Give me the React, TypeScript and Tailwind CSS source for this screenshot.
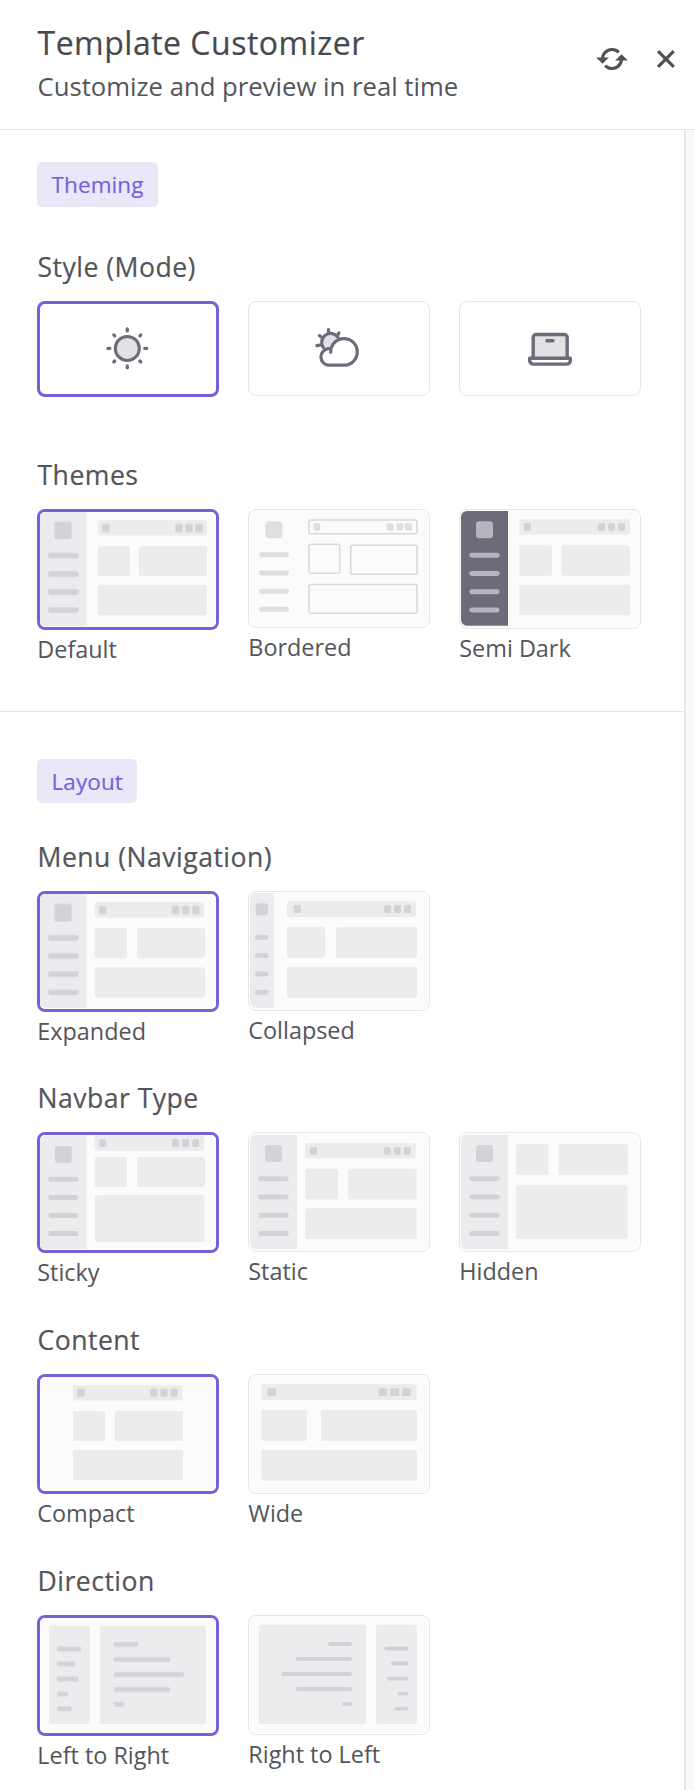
import type { ReactNode } from "react";
import { BiRefresh, BiX } from "react-icons/bi";

type Quad = [number, number, number, number];

const PANEL = "#ececee";
const MARK = "#d2d2d7";

/* Large light blocks: x, y, width, height */
function Blocks({ items }: { items: Quad[] }) {
  return (
    <>
      {items.map(([x, y, w, h], i) => (
        <rect key={i} x={x} y={y} width={w} height={h} rx={2.6} fill={PANEL} />
      ))}
    </>
  );
}

/* Small darker marks; soft ones get a translucent rim */
function Marks({ items, soft, fill = MARK, r = 2 }: { items: Quad[]; soft?: boolean; fill?: string; r?: number }) {
  return (
    <>
      {items.map(([x, y, w, h], i) => (
        <g key={i} fill={fill}>
          <rect x={x} y={y} width={w} height={h} rx={w > 15 && h > 15 ? 3 : r} opacity={soft ? 0.6 : 1} />
          {soft && <rect x={x + 1} y={y + 1} width={w - 2} height={h - 2} rx={r * 0.6} />}
        </g>
      ))}
    </>
  );
}

/* Horizontal strokes given by x, centre y, width, thickness */
function Lines({ items, soft, fill }: { items: Quad[]; soft?: boolean; fill?: string }) {
  return <Marks soft={soft} fill={fill} r={2.4} items={items.map(([x, c, w, h]): Quad => [x, c - h / 2, w, h])} />;
}

function Sidebar({ right, top = 2, bottom = 116.8, fill = PANEL }: { right: number; top?: number; bottom?: number; fill?: string }) {
  return (
    <path
      d={`M${right} ${top}H8a6 6 0 0 0-6 6V${bottom - 6}a6 6 0 0 0 6 6H${right}Z`}
      fill={fill}
    />
  );
}

function Tile({ height, selected, label, children }: { height: number; selected?: boolean; label?: string; children: ReactNode }) {
  const b = selected ? 3 : 1;
  return (
    <div className="flex w-[182px] flex-col gap-[3px]">
      <button
        type="button"
        style={{ height }}
        className={
          selected
            ? "block w-full overflow-hidden rounded-[8px] border-[3px] border-[#7462d9] bg-white"
            : "block w-full overflow-hidden rounded-[8px] border border-[#e6e6e8] bg-white"
        }
      >
        <svg className="block" width={182 - 2 * b} height={height - 2 * b} viewBox={`${b} ${b} ${182 - 2 * b} ${height - 2 * b}`}>
          {label && <rect x={2} y={2} width={178} height={height - 4} rx={6} fill="#fbfbfb" />}
          {children}
        </svg>
      </button>
      {label && <span className="pl-[0.3px] text-[23.4px] leading-8 text-[#54555a]">{label}</span>}
    </div>
  );
}

function Group({ title, className, children }: { title: string; className: string; children: ReactNode }) {
  return (
    <section className={className}>
      <h3 className="mb-4 pl-[0.5px] text-[26.6px] leading-9 tracking-[0.47px] text-[#54555a] [-webkit-text-stroke:0.2px_#54555a]">{title}</h3>
      <div className="flex items-start gap-[29px]">{children}</div>
    </section>
  );
}

function Badge({ className, children }: { className: string; children: ReactNode }) {
  return (
    <span className={`${className} flex w-fit items-center rounded-[5px] bg-[#eae7f8] pt-px pr-[14px] pl-[14.5px] text-[22.5px] tracking-[0.1px] text-[#7462d9] [-webkit-text-stroke:0.15px_#7462d9]`}>
      {children}
    </span>
  );
}

export default function App() {
  return (
    <div className="flex h-[1790px] w-[694px] flex-col overflow-hidden bg-white font-['Open_Sans',sans-serif]">
      <header className="flex h-[130px] shrink-0 items-start justify-between border-b border-[#e5e5e7] pl-[37px]">
        <div className="pt-5">
          <h1 className="pl-[0.5px] text-[32px] leading-[46px] tracking-[0.5px] text-[#48494d] [-webkit-text-stroke:0.2px_#48494d]">Template Customizer</h1>
          <p className="pl-[0.5px] text-[25.7px] leading-[42px] text-[#54555a]">Customize and preview in real time</p>
        </div>
        <div className="flex gap-[15.5px] pt-[39.5px] pr-[9.5px] text-[#505156]">
          <BiRefresh size={38} />
          <BiX size={38} />
        </div>
      </header>

      <div className="flex min-h-0 flex-1">
        <main className="w-[684px] shrink-0">
          <div className="h-[582px] border-b border-[#e5e5e7] pt-8 pl-[37px]">
            <Badge className="mb-[42px] h-[45px]">Theming</Badge>

            <Group title="Style (Mode)" className="h-[208px]">
              <Tile height={96} selected>
                <g stroke="#6d6b79" strokeWidth={3} strokeLinecap="round" transform="translate(90.3 47.4)">
                  <circle r={12} fill="#e2e1e6" />
                  <path d="M0-17.5V-19.4M0 17.5V19.4M-17.5 0H-19.4M17.5 0H19.4M12.6-12.6L13.5-13.5M-12.6-12.6L-13.5-13.5M12.6 12.6L13.5 13.5M-12.6 12.6L-13.5 13.5" strokeWidth={3.3} />
                </g>
              </Tile>
              <Tile height={95}>
                <g stroke="#6d6b79" strokeWidth={3.2} strokeLinecap="round" strokeLinejoin="round" fill="none">
                  <path d="M76 48A8.8 8.8 0 1 1 91 36.8C86.5 38.5 83.6 42 83 47.6Z" fill="#e2e1e6" stroke="none" />
                  <path d="M75.2 46.4A8.6 8.6 0 0 1 90 36.4" />
                  <path d="M80.4 28.6L80.8 32M91 31.8L89.2 35.2M71.4 34.6L74.2 36.8M68.9 44.7L73.4 43.9" />
                  <path d="M82.7 51.2A13.3 13.3 0 1 1 96 64.2H80.3A8.3 8.3 0 0 1 80.3 47.7Q81.6 47.6 82.6 47.8" />
                </g>
              </Tile>
              <Tile height={95}>
                <g stroke="#6d6b79" strokeWidth={3.4} strokeLinecap="round" strokeLinejoin="round">
                  <path d="M74.2 56.5V36.5a3 3 0 0 1 3-3H105.2a3 3 0 0 1 3 3V56.5" fill="#e2e1e6" />
                  <path d="M70.7 57.3H111.3V59.5a3.6 3.6 0 0 1-3.6 3.6H74.3a3.6 3.6 0 0 1-3.6-3.6Z" fill="white" />
                  <path d="M88 39.8H94" />
                </g>
              </Tile>
            </Group>

            <Group title="Themes" className="">
              <Tile height={121} selected label="Default">
                <Sidebar right={49.7} top={3.3} />
                <Blocks items={[[60.7, 11.3, 109.3, 15.3], [60.7, 37, 32.3, 30], [102, 37, 68, 30], [60.7, 76, 109.3, 30.3]]} />
                <Marks soft items={[[17, 12.3, 18, 18.3], [65, 14.5, 8, 9], [138, 14.5, 8, 9], [148, 14.5, 8, 9], [158, 14.5, 8, 9]]} />
                <Lines soft items={[[10.7, 46.7, 31.3, 6.3], [10.7, 65, 31.3, 6.3], [10.7, 83, 31.3, 6.3], [10.7, 101.2, 31.3, 6.3]]} />
              </Tile>
              <Tile height={119} label="Bordered">
                <g fill="none" stroke="#d9d9dd" strokeWidth={1.6}>
                  <rect x={61} y={11} width={108} height={13.7} rx={2} />
                  <rect x={61} y={35.3} width={30.7} height={29} rx={2} />
                  <rect x={102.7} y={36.3} width={66.3} height={29} rx={2} />
                  <rect x={61} y={75.5} width={108} height={28.7} rx={2} />
                </g>
                <Marks fill="#dfdfe1" items={[[17.3, 12.3, 17, 17], [65.3, 14.2, 7, 7.6], [138.5, 14.2, 7, 7.6], [148.5, 14.2, 7, 7.6], [157, 14.2, 7, 7.6]]} />
                <Lines fill="#dfdfe1" items={[[11, 45.8, 30, 5], [11, 64, 30, 5], [11, 82.2, 30, 5], [11, 100.3, 30, 5]]} />
              </Tile>
              <Tile height={120} label="Semi Dark">
                <Sidebar right={49} fill="#6d6b79" />
                <Blocks items={[[60.3, 10.3, 110.7, 15.3], [60.3, 36.3, 32.7, 30.4], [102.3, 36.3, 68.7, 30.4], [60.3, 76, 110.7, 30]]} />
                <Marks items={[[65, 14, 7, 8], [139, 14, 7, 8], [149, 14, 7, 8], [159, 14, 7, 8]]} />
                <Marks fill="#b6b5bd" items={[[17, 12.3, 17, 17]]} />
                <Lines fill="#b6b5bd" items={[[10.3, 46.2, 30.4, 5], [10.3, 64.4, 30.4, 5], [10.3, 82.7, 30.4, 5], [10.3, 101, 30.4, 5]]} />
              </Tile>
            </Group>
          </div>

          <div className="pt-[47px] pl-[37px]">
            <Badge className="mb-9 h-11">Layout</Badge>

            <Group title="Menu (Navigation)" className="h-[241px]">
              <Tile height={121} selected label="Expanded">
                <Sidebar right={49.7} top={3.3} />
                <Blocks items={[[57.7, 11.3, 109.3, 15.3], [57.7, 37, 32.3, 30.3], [100, 37, 68, 30.3], [57.7, 76.3, 110.3, 30.3]]} />
                <Marks soft items={[[17, 12.6, 18, 18.3], [61.7, 14.6, 8, 9], [134.7, 14.6, 8, 9], [144.7, 14.6, 8, 9], [154.7, 14.6, 8, 9]]} />
                <Lines soft items={[[10.7, 47, 31.3, 6.3], [10.7, 65, 31.3, 6.3], [10.7, 83.2, 31.3, 6.3], [10.7, 101.3, 31.3, 6.3]]} />
              </Tile>
              <Tile height={120} label="Collapsed">
                <Sidebar right={25.7} />
                <Blocks items={[[39, 10.3, 129, 15.7], [39, 36, 38, 31], [88, 36, 81, 31], [39, 76, 130, 30.7]]} />
                <Marks items={[[45.7, 14, 7, 8], [136, 14, 7, 8], [146, 14, 7, 8], [156, 14, 7, 8]]} r={1.5} />
                <Marks items={[[7.7, 12.3, 12.3, 12.3]]} r={3.5} />
                <Lines items={[[7, 46.3, 13.5, 5], [7, 64.6, 13.5, 5], [7, 82.9, 13.5, 5], [7, 101.2, 13.5, 5]]} />
              </Tile>
            </Group>

            <Group title="Navbar Type" className="h-[242px]">
              <Tile height={121} selected label="Sticky">
                <Sidebar right={49.7} top={3.7} bottom={117} />
                <Blocks items={[[57.7, 25, 32.3, 30], [100, 25, 68, 30], [57.9, 63, 109.7, 47]]} />
                <path d="M57.7 3.7H167V16.1a2.6 2.6 0 0 1-2.6 2.6H60.3a2.6 2.6 0 0 1-2.6-2.6Z" fill={PANEL} />
                <Marks items={[[18, 14, 16.8, 16.8], [62.3, 7, 6.8, 8], [135.2, 7, 6.8, 8], [145.2, 7, 6.8, 8], [155.2, 7, 6.8, 8]]} r={1.8} />
                <Lines items={[[11.3, 47.3, 30, 5], [11.3, 65.4, 30, 5], [11.3, 83.6, 30, 5], [11.3, 101.6, 30, 5]]} />
              </Tile>
              <Tile height={120} label="Static">
                <Sidebar right={49} top={3} bottom={117} />
                <Blocks items={[[57, 11, 110.7, 15.3], [57, 36.7, 33, 30.7], [100, 36.7, 68.7, 30.7], [57, 76.3, 111.7, 30.7]]} />
                <Marks items={[[17, 13, 17, 17], [62, 15, 7, 7.8], [135.7, 15, 7, 7.8], [145.7, 15, 7, 7.8], [155.7, 15, 7, 7.8]]} />
                <Lines items={[[10.3, 46.7, 30.4, 5], [10.3, 65, 30.4, 5], [10.3, 83.3, 30.4, 5], [10.3, 101.5, 30.4, 5]]} />
              </Tile>
              <Tile height={120} label="Hidden">
                <Sidebar right={49} top={3} bottom={117} />
                <Blocks items={[[57, 12.3, 32.8, 30.7], [99.7, 12.3, 69.3, 30.7], [57.2, 53, 111.2, 54]]} />
                <Marks items={[[17, 13, 17, 17]]} />
                <Lines items={[[10.3, 46.7, 30.4, 5], [10.3, 65, 30.4, 5], [10.3, 83.3, 30.4, 5], [10.3, 101.5, 30.4, 5]]} />
              </Tile>
            </Group>

            <Group title="Content" className="h-[241px]">
              <Tile height={120} selected label="Compact">
                <Blocks items={[[36, 11.3, 109.3, 15.3], [36, 37, 32, 30], [78, 37, 68, 30], [36, 76, 110, 30]]} />
                <Marks soft items={[[40, 14.3, 8, 9], [113, 14.3, 8, 9], [123, 14.3, 8, 9], [133, 14.3, 8, 9]]} />
              </Tile>
              <Tile height={120} label="Wide">
                <Blocks items={[[13.3, 10.3, 155.3, 15.7], [13.3, 36, 45.7, 31], [73, 36, 96, 31], [13.3, 76, 155.7, 30.7]]} />
                <Marks items={[[19.3, 14.3, 8.8, 7.8], [130.6, 14.3, 8.8, 7.8], [142.3, 14.3, 8.8, 7.8], [154, 14.3, 8.8, 7.8]]} r={1.5} />
              </Tile>
            </Group>

            <Group title="Direction" className="">
              <Tile height={121} selected label="Left to Right">
                <Blocks items={[[12, 10.7, 41, 98.4], [63, 10.7, 106, 98.4]]} />
                <Lines
                  soft
                  items={[
                    [19.7, 34, 25, 5.5], [19.7, 49, 18.3, 5.5], [19.7, 64, 22.3, 5.5], [19.7, 79, 12, 5.5], [19.7, 93.8, 15.3, 5.5],
                    [76.3, 29.5, 25, 5.5], [76.3, 44.4, 57, 5.5], [76.3, 59.4, 71.3, 5.5], [76.3, 74.4, 57, 5.5], [76.3, 89.3, 11.3, 5.5],
                  ]}
                />
              </Tile>
              <Tile height={120} label="Right to Left">
                <Blocks items={[[11, 9.7, 107, 99.4], [128, 9.7, 41, 99.4]]} />
                <Lines
                  items={[
                    [80, 29, 24, 4], [47.7, 44, 56.3, 4], [33.3, 59, 70.7, 4], [47.7, 74, 56.3, 4], [94, 89, 10, 4],
                    [136.3, 33.5, 24, 3.8], [143, 48.5, 17.3, 3.8], [139, 63.6, 21.3, 3.8], [149.6, 78.6, 10.7, 3.8], [146.3, 93.6, 14, 3.8],
                  ]}
                />
              </Tile>
            </Group>
          </div>
        </main>
        <div className="flex-1 border-l-2 border-[#e8e8e8] bg-[#fafafa]" />
      </div>
    </div>
  );
}
